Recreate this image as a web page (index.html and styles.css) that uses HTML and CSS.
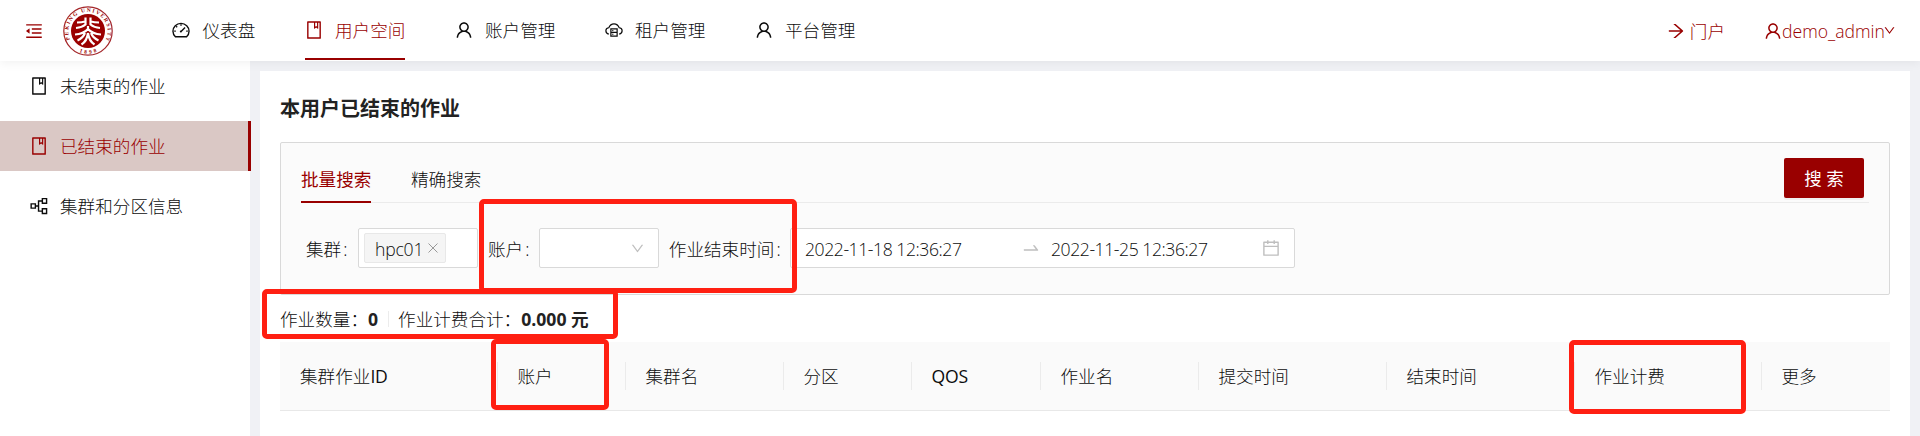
FILE: index.html
```html
<!DOCTYPE html>
<html lang="zh-CN">
<head>
<meta charset="utf-8">
<title>本用户已结束的作业</title>
<link rel="stylesheet" href="styles.css">
</head>
<body>
<svg class="sprite" aria-hidden="true">
  <symbol id="book" viewBox="0 0 1024 1024"><path d="M832 64H192c-17.7 0-32 14.3-32 32v832c0 17.7 14.3 32 32 32h640c17.7 0 32-14.3 32-32V96c0-17.7-14.3-32-32-32zm-260 72h96v209.9L621.5 312 572 347.4V136zm220 752H232V136h280v296.9c0 3.3 1 6.6 3 9.3a15.9 15.9 0 0022.3 3.7l83.8-59.9 81.4 59.4c2.7 2 6 3.1 9.4 3.1 8.8 0 16-7.2 16-16V136h64v752z"/></symbol>
  <symbol id="user" viewBox="0 0 1024 1024"><path d="M858.5 763.6a374 374 0 00-80.6-119.5 375.63 375.63 0 00-119.5-80.6c-.4-.2-.8-.3-1.2-.5C719.5 518 760 444.7 760 362c0-137-111-248-248-248S264 225 264 362c0 82.7 40.5 156 102.8 201.1-.4.2-.8.3-1.2.5-44.8 18.9-85 46-119.5 80.6a375.63 375.63 0 00-80.6 119.5A371.7 371.7 0 00136 901.8a8 8 0 008 8.2h60c4.4 0 7.9-3.5 8-7.8 2-77.2 33-149.5 87.8-204.3 56.7-56.7 132-87.9 212.2-87.9s155.5 31.2 212.2 87.9C779 752.7 810 825 812 902.2c.1 4.4 3.6 7.8 8 7.8h60a8 8 0 008-8.2c-1-47.8-10.9-94.3-29.5-138.2zM512 534c-45.9 0-89.1-17.9-121.6-50.4S340 407.9 340 362c0-45.9 17.9-89.1 50.4-121.6S466.1 190 512 190s89.1 17.9 121.6 50.4S684 316.1 684 362c0 45.9-17.9 89.1-50.4 121.6S557.9 534 512 534z"/></symbol>
  <symbol id="down" viewBox="0 0 1024 1024"><path d="M884 256h-75c-5.1 0-9.9 2.5-12.9 6.6L512 654.2 227.9 262.6c-3-4.1-7.8-6.6-12.9-6.6h-75c-6.5 0-10.3 7.4-6.5 12.7l352.6 486.1c12.8 17.6 39 17.6 51.7 0l352.6-486.1c3.9-5.3.1-12.7-6.4-12.7z"/></symbol>
  <symbol id="calendar" viewBox="0 0 1024 1024"><path d="M880 184H712v-64c0-4.4-3.6-8-8-8h-56c-4.4 0-8 3.6-8 8v64H384v-64c0-4.4-3.6-8-8-8h-56c-4.4 0-8 3.6-8 8v64H144c-17.7 0-32 14.3-32 32v664c0 17.7 14.3 32 32 32h736c17.7 0 32-14.3 32-32V216c0-17.7-14.3-32-32-32zm-40 656H184V460h656v380zM184 392V256h128v48c0 4.4 3.6 8 8 8h56c4.4 0 8-3.6 8-8v-48h256v48c0 4.4 3.6 8 8 8h56c4.4 0 8-3.6 8-8v-48h128v136H184z"/></symbol>
  <symbol id="swap" viewBox="0 0 1024 1024"><path d="M873.1 596.2l-164-208A32 32 0 00684 376h-64.8c-6.7 0-10.4 7.7-6.3 13l144.3 183H152c-4.4 0-8 3.6-8 8v60c0 4.4 3.6 8 8 8h695.9c26.8 0 41.7-30.8 25.2-51.8z"/></symbol>
  <symbol id="arrow" viewBox="0 0 1024 1024"><path d="M869 487.8L491.2 159.9c-2.9-2.5-6.6-3.9-10.5-3.9h-88.5c-7.4 0-10.8 9.2-5.2 14l350.2 304H152c-4.4 0-8 3.6-8 8v60c0 4.4 3.6 8 8 8h585.1L386.9 854c-5.6 4.9-2.2 14 5.2 14h91.5c1.9 0 3.8-.7 5.2-2L869 536.2a32.07 32.07 0 000-48.4z"/></symbol>
  <symbol id="fold" viewBox="0 0 1024 1024"><path d="M408 442h480c4.4 0 8-3.6 8-8v-56c0-4.4-3.6-8-8-8H408c-4.4 0-8 3.6-8 8v56c0 4.4 3.6 8 8 8zm-8 204c0 4.4 3.6 8 8 8h480c4.4 0 8-3.6 8-8v-56c0-4.4-3.6-8-8-8H408c-4.4 0-8 3.6-8 8v56zm504-486H120c-4.4 0-8 3.6-8 8v56c0 4.4 3.6 8 8 8h784c4.4 0 8-3.6 8-8v-56c0-4.4-3.6-8-8-8zm0 632H120c-4.4 0-8 3.6-8 8v56c0 4.4 3.6 8 8 8h784c4.4 0 8-3.6 8-8v-56c0-4.4-3.6-8-8-8zM115.4 518.9L271.7 642c5.8 4.6 14.4.5 14.4-6.9V388.9c0-7.4-8.5-11.5-14.4-6.9L115.4 505.1a8.74 8.74 0 000 13.8z"/></symbol>
  <symbol id="dash" viewBox="0 0 1024 1024"><g fill="none" stroke="currentColor" stroke-width="72"><path d="M226 860A412 400 0 1 1 798 860Z" stroke-linejoin="round"/><path d="M512 220v80M265 322l50 50M165 568h80M779 568h80M530 575l190-185"/></g><circle cx="506" cy="590" r="56"/></symbol>
  <symbol id="cloud" viewBox="0 0 1024 1024"><g fill="none" stroke="currentColor" stroke-width="68"><path d="M215 748C-10 690 0 400 215 385C330 90 694 90 809 385C1024 400 1034 690 809 748"/><path d="M334 448h356v408H334ZM334 652h356"/><path d="M400 550h80M400 752h80" stroke-width="52"/></g></symbol>
  <symbol id="parts" viewBox="0 0 1024 1024"><g fill="none" stroke="currentColor" stroke-width="72"><path d="M110 404h216v216H110ZM684 132h216v240H684ZM684 652h216v240H684ZM326 512h162M684 252H488v520h196"/></g></symbol>
</svg>

<header class="header">
  <svg class="fold"><use href="#fold"/></svg>
  <svg class="logo" viewBox="0 0 50 50">
    <defs>
      <path id="ringTop" d="M7 33.500A19.700 19.700 0 1 1 43 33.500"/>
      <path id="ringBottom" d="M8 40A22.600 22.600 0 0 0 42 40"/>
    </defs>
    <circle cx="25" cy="25" r="24.200" fill="#fff" stroke="#a4262a" stroke-width="1.200"/>
    <circle cx="25" cy="25" r="17" fill="#9b0000"/>
    <text class="logo-text"><textPath href="#ringTop" textLength="79">PEKING UNIVERSITY</textPath></text>
    <text class="logo-text"><textPath href="#ringBottom" startOffset="50%" text-anchor="middle" textLength="18">1898</textPath></text>
    <g fill="none" stroke="#fff" stroke-width="2.200">
      <path d="M22.500 11.500v7q-3.500 3-9.500 3.500M27.500 11.500v7q3.500 3 9.500 3.500M14 16.500q5 0 8-1M36 16.500q-5 0-8-1"/>
      <path d="M25 20v5M25 23q-4.500 5-13 5.500M25 23q4.500 5 13 5.500M22 27q-2 5-7.500 7.500M28 27q2 5 7.500 7.500M25 27q-1 8-6.500 11.500M25 27q1 8 6.500 11.500"/>
    </g>
  </svg>
  <nav class="nav">
    <a class="nav-item"><svg><use href="#dash"/></svg><span>仪表盘</span></a>
    <a class="nav-item nav-active"><svg><use href="#book"/></svg><span>用户空间</span></a>
    <a class="nav-item"><svg><use href="#user"/></svg><span>账户管理</span></a>
    <a class="nav-item"><svg class="cloud"><use href="#cloud"/></svg><span>租户管理</span></a>
    <a class="nav-item"><svg><use href="#user"/></svg><span>平台管理</span></a>
  </nav>
  <a class="portal"><svg><use href="#arrow"/></svg><span>门户</span></a>
  <a class="account"><svg><use href="#user"/></svg><span class="account-name">demo_admin</span><svg class="caret"><use href="#down"/></svg></a>
</header>

<div class="body">
  <aside class="side">
    <a class="side-item"><svg><use href="#book"/></svg><span>未结束的作业</span></a>
    <a class="side-item side-active"><svg><use href="#book"/></svg><span>已结束的作业</span></a>
    <a class="side-item"><svg><use href="#parts"/></svg><span>集群和分区信息</span></a>
  </aside>
  <main class="card">
    <h1 class="title">本用户已结束的作业</h1>
    <section class="filter">
      <div class="tabs">
        <span class="tab tab-active">批量搜索</span>
        <span class="tab">精确搜索</span>
        <button class="search">搜 索</button>
      </div>
      <div class="form">
        <label class="label label-first">集群<i>:</i></label>
        <div class="select select-tags"><span class="tag"><span>hpc01</span><svg viewBox="0 0 10 10"><path d="M.5.5l9 9M9.500.5l-9 9"/></svg></span></div>
        <label class="label">账户<i>:</i></label>
        <div class="select select-single"><svg><use href="#down"/></svg></div>
        <label class="label">作业结束时间<i>:</i></label>
        <div class="picker">
          <span class="date">2022-11-18 12:36:27</span>
          <svg class="swap"><use href="#swap"/></svg>
          <span class="date">2022-11-25 12:36:27</span>
          <svg class="calendar"><use href="#calendar"/></svg>
        </div>
      </div>
    </section>
    <div class="summary">
      <span>作业数量：</span><b>0</b><i class="divider"></i><span>作业计费合计：</span><b class="total">0.000 元</b>
    </div>
    <div class="table-head">
      <span>集群作业<b>ID</b></span><span>账户</span><span>集群名</span><span>分区</span><span><b>QOS</b></span><span>作业名</span><span>提交时间</span><span>结束时间</span><span>作业计费</span><span>更多</span>
    </div>
  </main>
</div>

<div class="mark mark-filter"></div>
<div class="mark mark-summary"></div>
<div class="mark mark-account"></div>
<div class="mark mark-fee"></div>
</body>
</html>
```
FILE: styles.css
```css
* { box-sizing: border-box; }
body {
  margin: 0;
  position: relative;
  height: 436px;
  overflow: hidden;
  background: #f0f1f5;
  color: #0c0c0c;
  font: 300 17.6px/28px "Open Sans", "Noto Sans CJK SC", sans-serif;
}
svg { fill: currentColor; flex: none; }
i { font-style: normal; }
.sprite { display: none; }

.header {
  position: relative;
  z-index: 1;
  display: flex;
  align-items: center;
  height: 61px;
  padding-left: 24px;
  background: #fff;
  box-shadow: 0 2px 10px rgba(0, 0, 0, .06);
}
.fold { width: 20px; height: 20px; color: #900; }
.logo { width: 50px; height: 50px; margin-left: 19px; }
.logo-text { font: 700 5.4px "Liberation Serif", serif; fill: #9b0000; }
.nav { display: flex; gap: 50px; height: 61px; margin-left: 59.5px; }
.nav-item { display: flex; align-items: center; gap: 12.5px; height: 60px; padding-top: 2px; border-bottom: 2px solid transparent; }
.nav-item:first-child { width: 82.5px; }
.nav-item:nth-child(n+2) { width: 100px; }
.nav-item span { white-space: nowrap; }
.nav-item svg, .side-item svg { width: 20px; height: 20px; margin: 0 -1.25px; }
.nav-item .cloud { width: 18px; height: 18px; margin: 0 -.25px; }
.nav-active { color: #900; border-bottom-color: #900; }
.portal { display: flex; align-items: center; gap: 4px; margin-left: auto; color: #900; }
.portal svg { width: 20px; height: 20px; }
.account { display: flex; align-items: center; width: 155px; margin-left: 40px; color: #900; }
.account svg { width: 20px; height: 20px; margin: 0 -2px; }
.account-name { width: 101px; margin-left: 1px; }
.account .caret { width: 13px; height: 13px; margin: 0; }

.body { display: flex; height: 375px; }
.side { width: 250px; background: #fff; flex: none; display: flex; flex-direction: column; gap: 10px; }
.side-item { display: flex; align-items: center; gap: 12.5px; height: 50px; padding-left: 30px; }
.side-active { margin-right: -1px; background: #dac8c5; color: #900; border-right: 3px solid #900; }

.card { flex: 1; margin: 10px 10px 0 10px; padding: 21px 20px 0; background: #fff; }
.title { margin: 0; height: 50px; font-size: 20px; line-height: 34px; font-weight: 700; color: #222; }
.filter { height: 153px; padding: 15px 20px 0; border: 1px solid #d9d9d9; border-radius: 2px; background: #fbfbfb; }
.tabs { display: flex; gap: 40px; height: 45px; border-bottom: 1px solid #ebebeb; }
.tab { width: 70px; height: 45px; line-height: 42px; white-space: nowrap; }
.tab-active { color: #900; border-bottom: 2px solid #900; font-weight: 400; }
.search {
  width: 80px; height: 40px; margin: 0 5px 0 auto; padding: 0;
  border: 0; border-radius: 2px; background: #900; color: #fff;
  font: 400 17.5px/40px "Open Sans", "Noto Sans CJK SC", sans-serif;
  box-shadow: 0 2px 0 rgba(0, 0, 0, .045);
}
.form { display: flex; align-items: center; height: 40px; margin-top: 25px; padding-left: 5px; }
.label { display: flex; height: 28px; padding-top: 1px; white-space: nowrap; }
.label i { width: 15.6px; padding-left: 2px; }
.label-first i { width: 16.8px; }
.select { width: 120px; height: 40px; margin-right: 10px; border: 1px solid #d9d9d9; border-radius: 2px; background: #fff; }
.select-tags { padding: 4px 5px; }
.tag { display: flex; align-items: center; width: 82px; height: 30px; padding-left: 10px; border: 1px solid #e8e8e8; border-radius: 2px; background: #f5f5f5; }
.tag span { width: 53px; padding-top: 2px; letter-spacing: -.2px; }
.tag svg { width: 10px; height: 10px; stroke: #999; fill: none; }
.select-single { display: flex; align-items: center; justify-content: flex-end; padding-right: 13px; color: #bfbfbf; }
.select-single svg { width: 15px; height: 15px; }
.picker { display: flex; align-items: center; width: 505px; height: 40px; padding-left: 14px; border: 1px solid #d9d9d9; border-radius: 2px; background: #fff; }
.date { width: 216px; padding-top: 2px; letter-spacing: -.44px; white-space: nowrap; }
.picker svg { color: #bfbfbf; }
.swap { width: 20px; height: 20px; margin-right: 10px; }
.calendar { width: 20px; height: 20px; margin-left: -6px; }

.summary { display: flex; align-items: center; height: 47px; padding-top: 1px; white-space: nowrap; }
.summary b { font-weight: 700; color: #222; }
.divider { width: 1px; height: 16px; margin: 0 9.5px; background: #ececec; }
.table-head {
  display: grid;
  grid-template-columns: 217.5px 128px 158px 128px 129px 158px 188px 188px 187px 128.5px;
  align-items: center;
  height: 69px;
  border-bottom: 1px solid #e8e8e8;
  background: #fafafa;
}
.table-head span { height: 28px; padding-left: 20px; border-right: 1px solid #ebebeb; }
.table-head span:last-child { border-right: 0; }
.table-head b { font-weight: 400; letter-spacing: -.2px; }

.mark { position: absolute; z-index: 2; border: 5px solid #ff1f12; border-radius: 5px; }
.mark-filter { left: 479px; top: 199px; width: 318px; height: 94px; }
.mark-summary { left: 262px; top: 289px; width: 356px; height: 50px; }
.mark-account { left: 491px; top: 339px; width: 118px; height: 71px; }
.mark-fee { left: 1569px; top: 340px; width: 177px; height: 74px; }
```
